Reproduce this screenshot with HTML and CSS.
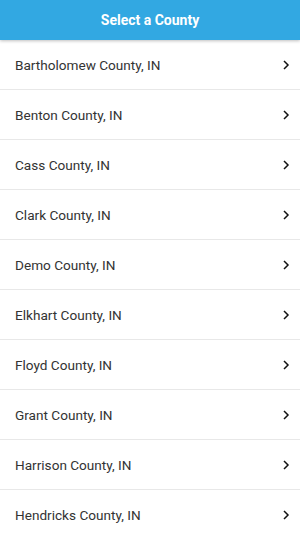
FILE: index.html
```html
<!DOCTYPE html>
<html lang="en">
<head>
    <meta charset="UTF-8">
    <meta name="viewport" content="width=device-width, initial-scale=1.0">
    <title>Select a County</title>
    <link rel="stylesheet" href="styles.css">
</head>
<body>
    <header class="top-bar">Select a County</header>

    <ul class="county-list">
        <li class="county-item"><span>Bartholomew County, IN</span><svg class="chevron" viewBox="0 0 8 12"><path d="M2 2 6 6 2 10"/></svg></li>
        <li class="county-item"><span>Benton County, IN</span><svg class="chevron" viewBox="0 0 8 12"><path d="M2 2 6 6 2 10"/></svg></li>
        <li class="county-item"><span>Cass County, IN</span><svg class="chevron" viewBox="0 0 8 12"><path d="M2 2 6 6 2 10"/></svg></li>
        <li class="county-item"><span>Clark County, IN</span><svg class="chevron" viewBox="0 0 8 12"><path d="M2 2 6 6 2 10"/></svg></li>
        <li class="county-item"><span>Demo County, IN</span><svg class="chevron" viewBox="0 0 8 12"><path d="M2 2 6 6 2 10"/></svg></li>
        <li class="county-item"><span>Elkhart County, IN</span><svg class="chevron" viewBox="0 0 8 12"><path d="M2 2 6 6 2 10"/></svg></li>
        <li class="county-item"><span>Floyd County, IN</span><svg class="chevron" viewBox="0 0 8 12"><path d="M2 2 6 6 2 10"/></svg></li>
        <li class="county-item"><span>Grant County, IN</span><svg class="chevron" viewBox="0 0 8 12"><path d="M2 2 6 6 2 10"/></svg></li>
        <li class="county-item"><span>Harrison County, IN</span><svg class="chevron" viewBox="0 0 8 12"><path d="M2 2 6 6 2 10"/></svg></li>
        <li class="county-item"><span>Hendricks County, IN</span><svg class="chevron" viewBox="0 0 8 12"><path d="M2 2 6 6 2 10"/></svg></li>
    </ul>
</body>
</html>
```

FILE: styles.css
```css
body {
    margin: 0;
    font-family: Roboto, "Liberation Sans", sans-serif;
    background-color: #fff;
    overflow: hidden;
}

.top-bar {
    height: 40px;
    line-height: 40px;
    text-align: center;
    background-color: #32a8e2;
    color: #fff;
    font-size: 14px;
    font-weight: bold;
    box-shadow: 0 1px 3px rgba(0, 0, 0, 0.25);
    position: relative;
}

.county-list {
    list-style: none;
    margin: 0;
    padding: 0;
}

.county-item {
    display: flex;
    align-items: center;
    justify-content: space-between;
    height: 49px;
    padding: 0 10px 0 15px;
    border-bottom: 1px solid #e8e8e8;
    font-size: 13.6px;
    color: #333;
}

.chevron {
    width: 8px;
    height: 12px;
    fill: none;
    stroke: #111;
    stroke-width: 1.5;
}
```
